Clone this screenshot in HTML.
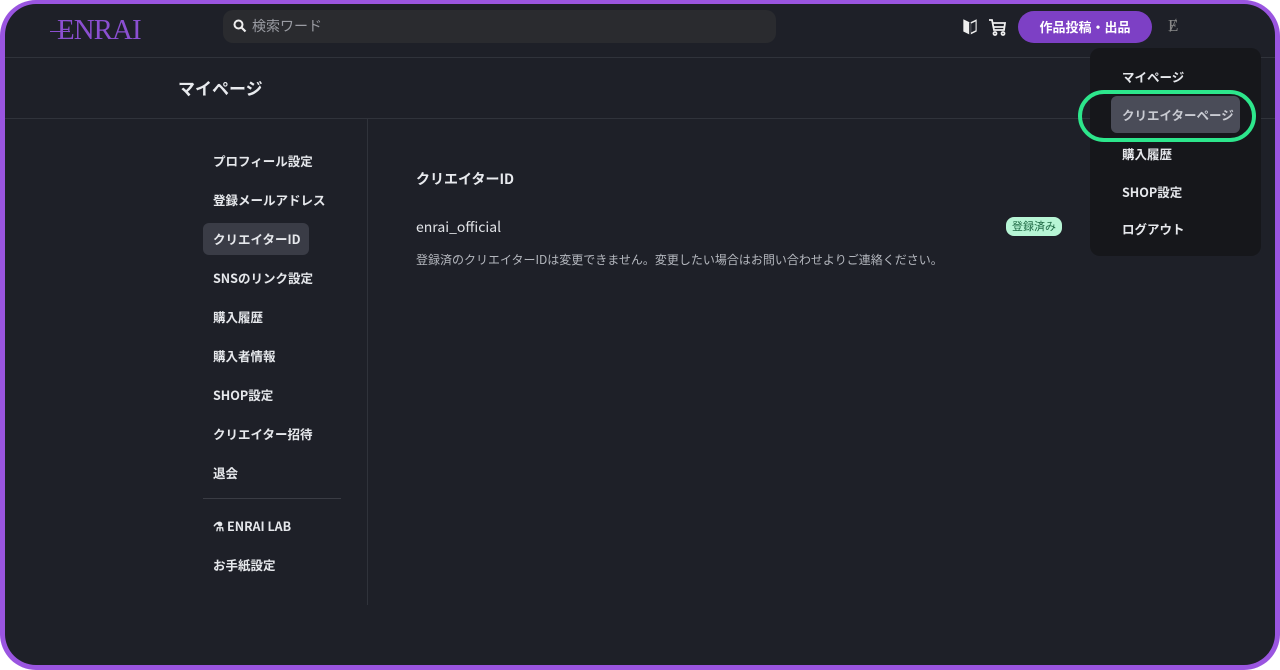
<!DOCTYPE html>
<html><head><meta charset="utf-8"><style>
*{box-sizing:border-box;margin:0;padding:0}
body{width:1280px;height:670px;background:#fff;font-family:"Noto Sans CJK JP","Liberation Sans",sans-serif;overflow:hidden;position:relative;line-height:1.2}
.frame{position:absolute;left:0;top:0;width:1280px;height:670px;border-radius:36px;background:#9a55e0}
.inner{position:absolute;left:5px;top:4px;width:1270px;height:661px;border-radius:31px;background:#1e2028;overflow:hidden}
.abs{position:absolute}
.hline{position:absolute;left:0;width:1270px;height:1px;background:#30333b}
.side{position:absolute;left:208px;font-size:12.5px;font-weight:bold;color:#e6e8ec}
.menu{position:absolute;left:1117px;font-size:12.5px;font-weight:bold;color:#e6e8ec}
</style></head><body>
<div class="frame"></div>
<div class="inner">
<div class="hline" style="top:53px"></div>
<div class="hline" style="top:114px"></div>
<div class="abs" style="left:362px;top:115px;width:1px;height:486px;background:#30333b"></div>
<div class="abs" style="left:52px;top:9px;font-family:'Liberation Serif',serif;font-size:29px;color:#8b4fd1;letter-spacing:-1px">ENRAI</div>
<div class="abs" style="left:45px;top:27px;width:20px;height:1px;background:#8b4fd1"></div>
<div class="abs" style="left:218px;top:6px;width:553px;height:33px;background:#2a2b2f;border-radius:10px"></div>
<svg class="abs" style="left:228px;top:15px" width="14" height="14" viewBox="0 0 14 14"><circle cx="5.5" cy="5.5" r="4" stroke="#eee" stroke-width="2" fill="none"/><path d="M8.5 8.5L12.5 12.5" stroke="#eee" stroke-width="2.2"/></svg>
<div class="abs" style="left:247px;top:14px;font-size:14px;color:#9a9ca3">検索ワード</div>
<svg class="abs" style="left:956px;top:13px" width="18" height="20" viewBox="0 0 16 18"><path d="M2 2L8 5L14 2V13L8 16L2 13Z" fill="#eee"/><path d="M8 5V16" stroke="#1e2028" stroke-width="1.5"/><path d="M9 6L13 4V12L9 14Z" fill="#1e2028"/></svg>
<svg class="abs" style="left:983px;top:13px" width="20" height="20" viewBox="0 0 20 20" fill="none" stroke="#eee" stroke-width="1.8"><path d="M1 3H4L6 13H16L17 6H5"/><path d="M6 10H16"/><circle cx="7" cy="16.5" r="1.5"/><circle cx="15" cy="16.5" r="1.5"/></svg>
<div class="abs" style="left:1013px;top:7px;width:134px;height:32px;border-radius:16px;background:#7d40c5;color:#fff;font-size:13px;font-weight:bold;text-align:center;line-height:32px">作品投稿・出品</div>
<div class="abs" style="left:1163px;top:12px;font-family:'Liberation Serif',serif;font-size:17px;color:#888">Ɇ</div>
<div class="abs" style="left:173px;top:74px;font-size:17px;font-weight:bold;color:#e8eaee">マイページ</div>
<div class="abs" style="left:198px;top:219px;width:106px;height:32px;border-radius:6px;background:#3a3c46"></div>
<div class="side" style="top:149px">プロフィール設定</div>
<div class="side" style="top:188px">登録メールアドレス</div>
<div class="side" style="top:227px">クリエイターID</div>
<div class="side" style="top:266px">SNSのリンク設定</div>
<div class="side" style="top:305px">購入履歴</div>
<div class="side" style="top:344px">購入者情報</div>
<div class="side" style="top:383px">SHOP設定</div>
<div class="side" style="top:422px">クリエイター招待</div>
<div class="side" style="top:461px">退会</div>
<div class="abs" style="left:198px;top:494px;width:138px;height:1px;background:#3a3c44"></div>
<div class="side" style="top:514px">⚗ ENRAI LAB</div>
<div class="side" style="top:553px">お手紙設定</div>
<div class="abs" style="left:411px;top:167px;font-size:14px;font-weight:bold;color:#e8eaee">クリエイターID</div>
<div class="abs" style="left:411px;top:215px;font-size:14px;color:#e0e2e6">enrai_official</div>
<div class="abs" style="left:1001px;top:213px;width:56px;height:19px;border-radius:8px;background:#b7f5d5;color:#1f6a45;font-size:11px;text-align:center;line-height:19px">登録済み</div>
<div class="abs" style="left:411px;top:249px;font-size:12px;color:#b4b7be">登録済のクリエイターIDは変更できません。変更したい場合はお問い合わせよりご連絡ください。</div>
<div class="abs" style="left:1085px;top:44px;width:171px;height:208px;border-radius:10px;background:#16171b"></div>
<div class="abs" style="left:1106px;top:92px;width:129px;height:37px;border-radius:6px;background:#4a4c58"></div>
<div class="abs" style="left:1073px;top:86px;width:178px;height:52px;border:4px solid #2de68c;border-radius:26px"></div>
<div class="menu" style="top:65px">マイページ</div>
<div class="menu" style="top:103px;color:#c9cbd2">クリエイターページ</div>
<div class="menu" style="top:142px">購入履歴</div>
<div class="menu" style="top:180px">SHOP設定</div>
<div class="menu" style="top:217px">ログアウト</div>
</div>
</body></html>
